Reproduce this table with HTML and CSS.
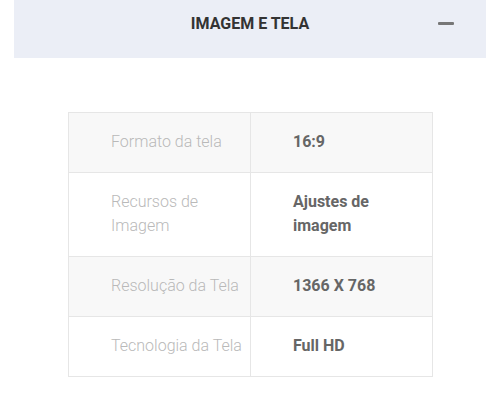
FILE: index.html
```html
<!DOCTYPE html>
<html lang="pt">
<head>
<meta charset="utf-8">
<link rel="stylesheet" href="styles.css">
</head>
<body>
<div class="page">
  <div class="header">
    <span class="title">IMAGEM E TELA</span>
    <span class="toggle"></span>
  </div>
  <table class="specs">
    <tr class="shade">
      <td class="label">Formato da tela</td>
      <td class="value">16:9</td>
    </tr>
    <tr>
      <td class="label">Recursos de Imagem</td>
      <td class="value">Ajustes de imagem</td>
    </tr>
    <tr class="shade">
      <td class="label">Resolução da Tela</td>
      <td class="value">1366 X 768</td>
    </tr>
    <tr>
      <td class="label">Tecnologia da Tela</td>
      <td class="value">Full HD</td>
    </tr>
  </table>
</div>
</body>
</html>
```
FILE: styles.css
```css
html, body {
  margin: 0;
  padding: 0;
  background: #fff;
}
body {
  font-family: Roboto, "Liberation Sans", sans-serif;
}
.page {
  width: 500px;
  height: 403px;
  overflow: hidden;
}
.header {
  margin: 0 14px;
  height: 58px;
  background: #ebeef6;
  position: relative;
  display: flex;
  justify-content: center;
  padding-top: 13px;
  box-sizing: border-box;
}
.title {
  font-size: 16px;
  font-weight: 700;
  color: #333;
  line-height: 22px;
}
.toggle {
  position: absolute;
  right: 32px;
  top: 22px;
  width: 16px;
  height: 3px;
  background: #777;
  border-radius: 1px;
}
.specs {
  margin: 54px 0 0 68px;
  width: 365px;
  border-collapse: collapse;
  table-layout: fixed;
}
.specs td {
  border: 1px solid #e6e6e6;
  font-size: 16px;
  line-height: 24px;
  padding: 17px 4px 18px 42px;
  vertical-align: top;
}
.specs .value {
  padding-right: 30px;
}
.shade td {
  background: #f8f8f8;
}
.label {
  font-weight: 300;
  color: #b9b9b9;
}
.value {
  font-weight: 700;
  color: #666;
}
```
